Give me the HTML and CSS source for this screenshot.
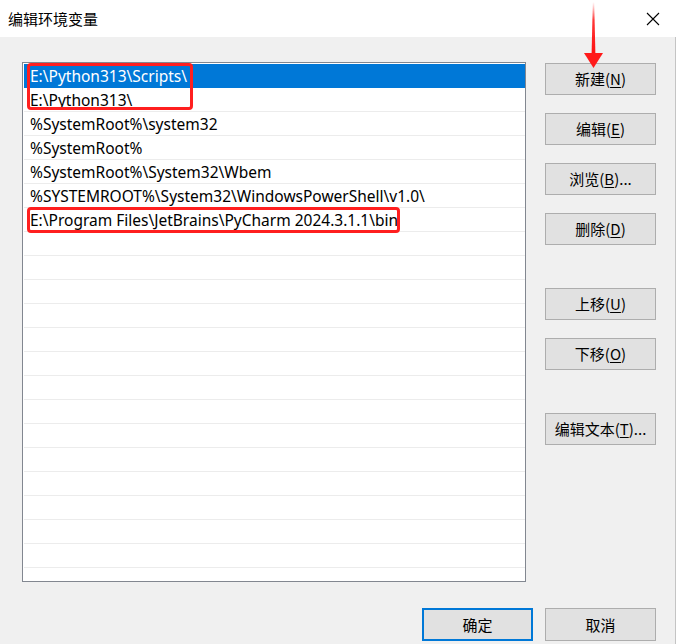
FILE: index.html
```html
<!DOCTYPE html>
<html lang="zh-CN">
<head>
<meta charset="utf-8">
<title>编辑环境变量</title>
<link rel="stylesheet" href="styles.css">
</head>
<body>
<div class="window">
  <div class="titlebar">
    <span class="title">编辑环境变量</span>
    <svg class="close" width="14" height="14" viewBox="0 0 14 14"><path d="M1 1L13 13M13 1L1 13" stroke="#000" stroke-width="1.1" fill="none"/></svg>
  </div>
  <div class="content">
    <div class="main">
      <div class="list">
        <div class="row selected">E:\Python313\Scripts\</div>
        <div class="row">E:\Python313\</div>
        <div class="row">%SystemRoot%\system32</div>
        <div class="row">%SystemRoot%</div>
        <div class="row">%SystemRoot%\System32\Wbem</div>
        <div class="row">%SYSTEMROOT%\System32\WindowsPowerShell\v1.0\</div>
        <div class="row">E:\Program Files\JetBrains\PyCharm 2024.3.1.1\bin</div>
        <div class="row"></div><div class="row"></div><div class="row"></div>
        <div class="row"></div><div class="row"></div><div class="row"></div>
        <div class="row"></div><div class="row"></div><div class="row"></div>
        <div class="row"></div><div class="row"></div><div class="row"></div>
        <div class="row"></div><div class="row"></div><div class="row"></div>
      </div>
      <div class="side">
        <div class="group">
          <button class="btn">新建(<u>N</u>)</button>
          <button class="btn">编辑(<u>E</u>)</button>
          <button class="btn">浏览(<u>B</u>)...</button>
          <button class="btn">删除(<u>D</u>)</button>
        </div>
        <div class="group">
          <button class="btn">上移(<u>U</u>)</button>
          <button class="btn">下移(<u>O</u>)</button>
        </div>
        <div class="group">
          <button class="btn">编辑文本(<u>T</u>)...</button>
        </div>
      </div>
    </div>
    <div class="footer">
      <button class="btn btn-footer btn-default">确定</button>
      <button class="btn btn-footer">取消</button>
    </div>
  </div>
  <div class="mark mark-one"></div>
  <div class="mark mark-two"></div>
  <svg class="arrow" width="24" height="72" viewBox="0 0 24 72">
    <defs>
      <linearGradient id="shaft" x1="0" y1="0" x2="0" y2="1">
        <stop offset="0" stop-color="#ff2a2a" stop-opacity="0"/>
        <stop offset="0.35" stop-color="#ff2020" stop-opacity="0.9"/>
        <stop offset="1" stop-color="#ff1010"/>
      </linearGradient>
    </defs>
    <polygon points="10.8,2 12.2,2 13.4,54 9.6,54" fill="url(#shaft)"/>
    <polygon points="2,53 21,53 11.5,68" fill="#ff1a1a"/>
  </svg>
</div>
</body>
</html>
```
FILE: styles.css
```css
* { box-sizing: border-box; }
html, body { margin: 0; padding: 0; }
body {
  width: 676px;
  height: 644px;
  overflow: hidden;
  background: #f0f0f0;
  font-family: "Noto Sans", "Noto Sans CJK SC", sans-serif;
}
.window {
  position: relative;
  width: 676px;
  height: 644px;
  background: #f0f0f0;
}
.titlebar {
  height: 37px;
  background: #fff;
  display: flex;
  align-items: center;
  justify-content: space-between;
  padding: 0 16px 0 8px;
}
.title {
  font-family: "Noto Sans CJK SC", sans-serif;
  font-size: 15px;
  color: #000;
  line-height: 20px;
}
.close { display: block; }
.content {
  height: 607px;
  padding: 25px 0 0 22px;
  border-right: 1px solid #c4c4c4;
}
.main {
  display: flex;
  align-items: flex-start;
}
.list {
  width: 504px;
  height: 520px;
  border: 1px solid #828790;
  background: #fff;
  padding: 1px 0 0 1px;
  overflow: hidden;
}
.row {
  height: 24px;
  line-height: 24px;
  border-bottom: 1px solid #ececec;
  padding-left: 6px;
  font-size: 15.5px;
  color: #000;
  white-space: nowrap;
}
.row.selected {
  background: #0078d7;
  color: #fff;
  border-bottom-color: #0078d7;
}
.side {
  margin-left: 19px;
  margin-top: 1px;
  display: flex;
  flex-direction: column;
  gap: 43px;
}
.group {
  display: flex;
  flex-direction: column;
  gap: 18px;
}
.btn {
  width: 111px;
  height: 32px;
  background: #e1e1e1;
  border: 1px solid #adadad;
  font-family: "Noto Sans CJK SC", sans-serif;
  font-size: 15px;
  color: #000;
  padding: 0;
  margin: 0;
  line-height: 20px;
}
.btn u { text-decoration-thickness: 1px; text-underline-offset: 2px; }
.footer {
  display: flex;
  justify-content: flex-end;
  gap: 12px;
  margin-top: 26px;
  padding-right: 19px;
}
.btn-footer { height: 33px; }
.btn-default {
  width: 111px;
  border: 2px solid #0078d7;
}
.mark {
  position: absolute;
  border: 3px solid #ff1f1f;
  border-radius: 4px;
}
.mark-one { left: 27px; top: 63px; width: 166px; height: 47px; }
.mark-two { left: 27px; top: 207px; width: 373px; height: 26px; }
.arrow {
  position: absolute;
  left: 582px;
  top: 0;
}
```
